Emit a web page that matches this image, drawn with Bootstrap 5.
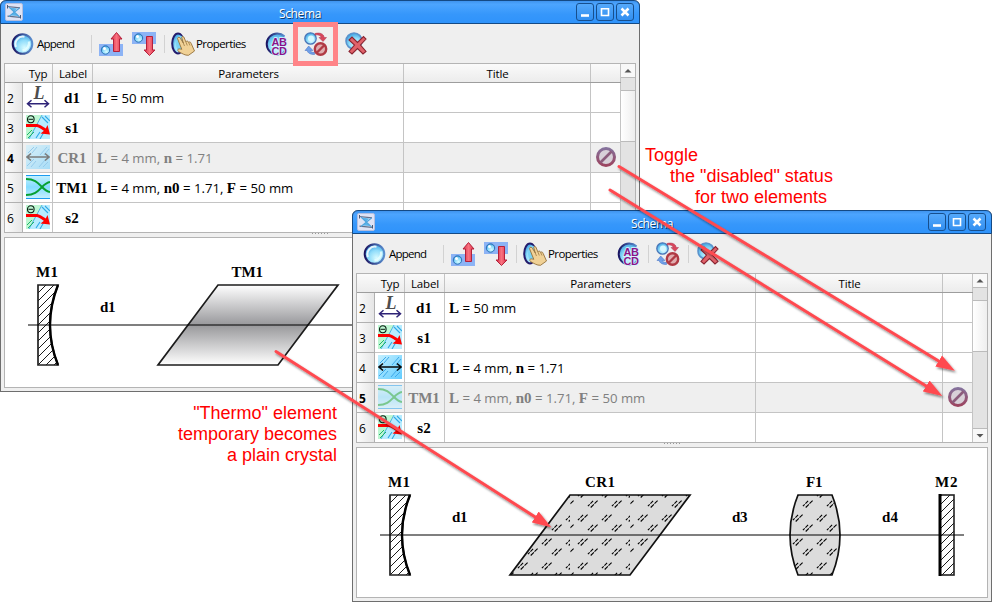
<!DOCTYPE html>
<html lang="en">
<head>
<meta charset="utf-8">
<title>Schema</title>
<link rel="stylesheet" href="https://cdn.jsdelivr.net/npm/bootstrap@5.3.0/dist/css/bootstrap.min.css">
<style>
body{width:992px;height:602px;overflow:hidden;background:#fff;color:#000;font:12px/16px "Open Sans","Noto Sans",sans-serif}
.desk{width:992px;height:602px}
.win{position:absolute;width:640px;height:392px;background:#efefef;border:1px solid #6e6e6e;border-top:0;border-radius:6px 6px 0 0}
.win-a{left:0;top:0}
.win-b{left:352px;top:210px}
.bar-title{height:24px;margin:0 -1px;border:1px solid #144a85;border-radius:6px 6px 0 0;background:linear-gradient(#3f93ee,#4ca5ff 15%,#3697fb 60%,#2f93fb);color:#fff;text-shadow:1px 1px 0 #123c6c;padding:0 5px 0 4px}
.bar-title .caption{font-size:12px;line-height:23px;letter-spacing:-.4px;padding:2px 0 0 1px}
.bar-title .wgroup{gap:2px}
.bar-title .wbtn{width:18px;height:18px;border:1px solid #174f8d;border-radius:3px;background:linear-gradient(#55a9fb,#328ff0)}
.tools{display:grid;height:39px;padding-left:10px;grid-template-columns:80px 8px 33px 32px 7px 93px 32px 8px 32px 9px 24px;align-items:center}
.tools .tbtn{display:flex;align-items:center;white-space:nowrap;font-size:11.5px;letter-spacing:-.6px;gap:1px}
.tools .tbtn-add span{margin-left:1px;letter-spacing:-.75px}
.tools i{width:1px;height:18px;background:#d2d2d2}
.frame{margin:0 3px;border:1px solid #b4b4b4}
.grid-row,.grid-head{display:grid;grid-template-columns:18px 30px 40px 311px 187px 30px;width:616px}
.grid-head{height:19px;background:linear-gradient(#fafafa,#ececec);text-align:center;line-height:19px;font-size:11.5px;border-bottom:1px solid #9d9d9d;letter-spacing:-.15px}
.grid-head>div{border-right:1px solid #c4c4c4;height:18px;padding-left:1px}
.grid-head>div:first-child{border:0}
.grid-row{height:30px;background:#fff;line-height:28px;grid-template-rows:30px}
.grid-row:last-child{height:29px;grid-template-rows:29px}
.grid-row>div{border-right:1px solid #c4c4c4;border-bottom:1px solid #c4c4c4;white-space:nowrap;padding-top:1px}
.grid-row:last-child>div{border-bottom:0}
.grid-row .num{background:linear-gradient(90deg,#fbfbfb,#e6e6e6);padding-left:2px;padding-top:2px;font-size:12px;border-color:#b0b0b0}
.grid-row .pic{padding:2px 0 0 3px;line-height:0}
.grid-row .lbl,.grid-row b{font:bold 15px/28px "Liberation Serif",serif}
.grid-row .lbl{text-align:center;padding-right:1px}
.grid-row .par{padding-left:4px;font-size:13.2px}
.grid-row .stat{padding:4px 0 0 5px;line-height:0}
.grid-row.off{background:#efefef}
.grid-row.off .par,.grid-row.off .lbl{color:#808080}
.grid-row.off .pic svg{opacity:.5}
.grid-row.off .num{font-weight:bold}
.scroller{width:14px;background:#e3e3e3}
.scroller .sb{height:14px;background:#f8f8f8;border-bottom:1px solid #bbb;line-height:0}
.scroller .gapper{height:12px}
.scroller .thumb{height:52px;border:solid #bbb;border-width:1px 0;background:linear-gradient(90deg,#fff,#eee)}
.scroller .sb-end{border-bottom:0;border-top:1px solid #bbb}
.grip{height:4px;line-height:0;text-align:center}
.view{height:151px;background:#fff;line-height:0}
.view text{font:bold 15px "Liberation Serif",serif}
.mark-box{position:absolute;left:293px;top:22px;width:45px;height:44px;border:5px solid #ff8488}
.note{position:absolute;color:#f00;font:18px/21px "Liberation Sans",Arial,sans-serif;white-space:nowrap}
.note-a{left:645px;top:145px}
.note-b{right:655px;top:402.5px;text-align:right}
.note .in1{padding-left:25px}
.note .in2{padding-left:50px}
.over{position:absolute;left:0;top:0}
</style>
<script src="https://cdn.jsdelivr.net/npm/bootstrap@5.3.0/dist/js/bootstrap.bundle.min.js"></script>
</head>
<body>
<svg width="0" height="0" class="position-absolute">
<defs>
<radialGradient id="gBall" cx=".6" cy=".7" r=".7"><stop offset="0" stop-color="#d8fbff"/><stop offset=".55" stop-color="#8fdcfa"/><stop offset="1" stop-color="#3a9fe0"/></radialGradient>
<linearGradient id="gRim" x2="1" y2="0"><stop offset="0" stop-color="#1c1460"/><stop offset="1" stop-color="#5a8fd0"/></linearGradient>
<linearGradient id="gRed" x2="1" y2="0"><stop offset="0" stop-color="#d92c45"/><stop offset=".5" stop-color="#f8717f"/><stop offset="1" stop-color="#dd3048"/></linearGradient>
<linearGradient id="gSky" x2="0" y2="1"><stop offset="0" stop-color="#c9f1ff"/><stop offset=".5" stop-color="#84dcff"/><stop offset="1" stop-color="#c9f1ff"/></linearGradient>
<linearGradient id="gCr" x2="1" y2="1"><stop offset="0" stop-color="#c4f0ff"/><stop offset="1" stop-color="#62ccff"/></linearGradient>
<linearGradient id="gTm" x2="0" y2="1"><stop offset="0" stop-color="#fff"/><stop offset=".5" stop-color="#98989b"/><stop offset="1" stop-color="#fff"/></linearGradient>
<linearGradient id="gNo" x2="0" y2="1"><stop offset="0" stop-color="#85719b"/><stop offset="1" stop-color="#9c4560"/></linearGradient>
<pattern id="hatch" width="8" height="8" patternUnits="userSpaceOnUse" patternTransform="translate(38 285)"><path d="M-1 9L9 -1M-1 1L1 -1M7 9L9 7" stroke="#000" stroke-width=".9"/></pattern>
<g id="tick"><path d="M-4.800 2.600L-3 .8M-2.300 .1L.4 -2.600M-2 4L1.200 .8M1.800 .2L4.900 -2.900" stroke="#000" stroke-width="1.100" fill="none"/></g>
<pattern id="glass" width="60" height="24" patternUnits="userSpaceOnUse" patternTransform="translate(158 285)">
<rect width="60" height="24" fill="#dcdcdc"/>
<use href="#tick" x="-1.3" y="8.5"/><use href="#tick" x="22.7" y="8.5"/><use href="#tick" x="46.7" y="8.5"/>
<use href="#tick" x="12.7" y="22.5"/><use href="#tick" x="36.7" y="22.5"/><use href="#tick" x="60.7" y="22.5"/>
<use href="#tick" x="12.7" y="-1.5"/><use href="#tick" x="36.7" y="-1.5"/><use href="#tick" x="60.7" y="-1.5"/>
</pattern>
<pattern id="glass2" href="#glass" patternTransform="translate(433 285)"/>

<symbol id="i-ball" viewBox="0 0 24 24"><circle cx="11.500" cy="12" r="9.800" fill="url(#gBall)" stroke="url(#gRim)" stroke-width="2"/><path d="M5 15A7.500 7.500 0 0 1 13.500 4.800" fill="none" stroke="#fff" stroke-width="2" opacity=".85"/><path d="M18 9.500A7.500 7.500 0 0 1 11.500 18.500" fill="none" stroke="#e8ffff" stroke-width="2.500" opacity=".8"/></symbol>
<symbol id="i-up" viewBox="0 0 24 24"><rect y="12" width="24" height="12" fill="#8cb3f5"/><circle cx="6.500" cy="18" r="4.200" fill="url(#gBall)" stroke="#2b6fb5"/><circle cx="5.500" cy="16.500" r="1.500" fill="#fff"/><path d="M17.500 .5L23 7H20.500V19.500H14.500V7H12z" fill="url(#gRed)" stroke="#b3203a"/></symbol>
<symbol id="i-down" viewBox="0 0 24 24"><rect width="24" height="12" fill="#8cb3f5"/><circle cx="6.500" cy="6" r="4.200" fill="url(#gBall)" stroke="#2b6fb5"/><circle cx="5.500" cy="4.500" r="1.500" fill="#fff"/><path d="M17.500 23.500L23 18H20.500V4.500H14.500V18H12z" fill="url(#gRed)" stroke="#b3203a"/></symbol>
<symbol id="i-hand" viewBox="0 0 24 24"><ellipse cx="7" cy="11.500" rx="5.800" ry="10" fill="url(#gBall)" stroke="#241c6c" stroke-width="2"/><ellipse cx="9" cy="11.500" rx="4" ry="8" fill="#79d2f5"/><path d="M6.500 6.500C7 4.600 8.800 5 9.500 6.500L12.300 11L10.700 5.500C11 4 12.800 4.200 13.300 6L14.800 9.800C15.500 8.600 17 8.800 17.500 10.200C18.500 9.500 20 10.200 20.200 11.500L23.500 19L17.500 23.300C14 23.500 11 21.500 7.500 19.500C6 18 7 16.500 9.300 17L10.800 17.300L9 13z" fill="#f0d196" stroke="#94703a" stroke-width=".9"/><path d="M12.300 11L13.500 14M14.800 9.800L16.300 13.500M17.500 10.200L19 13.500" stroke="#94703a" stroke-width=".7"/></symbol>
<symbol id="i-abcd" viewBox="0 0 24 24"><path d="M20.500 4A11 11 0 1 0 20.500 20z" fill="url(#gBall)"/><path d="M20.500 4.200A10.600 10.600 0 1 0 20.500 19.800" fill="none" stroke="url(#gRim)" stroke-width="2"/><g font-family="Liberation Sans,sans-serif" font-weight="700" font-size="11" fill="#8a1489" stroke="#d9f6ff" stroke-width="1.500" paint-order="stroke"><text x="7.500" y="13.500" textLength="15.500">AB</text><text x="7.500" y="23" textLength="15.500">CD</text></g></symbol>
<symbol id="i-toggle" viewBox="0 0 24 24"><circle cx="6.500" cy="6.500" r="5.700" fill="url(#gBall)" stroke="#4a76b8" stroke-width="1.300"/><circle cx="7" cy="6.500" r="3" fill="#d6f8ff"/><path d="M11 1.500C16 .2 19.800 1.800 20.200 5.500H22.500L19 9.500L15 5.500H17.200C16.500 3.500 14.500 2.500 11 3z" fill="#d8475c" stroke="#aa3550" stroke-width=".5"/><path d="M10.500 22.500C6.500 22.500 3.500 21 3.200 18.500H1L4.700 14L9 18.500H6.300C7 20 8.300 20.500 10.500 20.300z" fill="#6f9fe8" stroke="#3f6cc0" stroke-width=".5"/><circle cx="16.500" cy="17" r="5.700" fill="#e0aeb0" stroke="#b03a44" stroke-width="2.400"/><path d="M12.500 21L20.500 13" stroke="#b03a44" stroke-width="2.400"/></symbol>
<symbol id="i-del" viewBox="0 0 24 24"><circle cx="9" cy="9" r="8" fill="url(#gBall)" stroke="#5b93cc" stroke-width="1.600"/><path d="M4 8L7 5L12.500 10.500L18.500 4.500L21 7L15.500 13L21 19.500L18 22L12.500 16.500L7 22L4 19.500L9.500 13z" fill="#e0626a" stroke="#8a2430" stroke-width="1.100"/></symbol>
<symbol id="i-app" viewBox="0 0 18 18"><rect x=".5" y=".5" width="17" height="17" rx="1.500" fill="#dfe3f5" stroke="#b4bfdf"/><path d="M5 4.500L12 5.500L9 9zM9 9L13.500 13L6 12.500z" fill="#5ab4ea"/><path d="M2.500 3.500L15 4.800M2.500 13.200L15 14.300" stroke="#65708a" stroke-width="1.200"/><path d="M4 4L14.500 14M14.500 5L4 13.500" stroke="#4fa5de" stroke-width="1.100"/><path d="M2.500 2V5.500M15.500 12V15.500" stroke="#4c5873"/></symbol>
<symbol id="t-len" viewBox="0 0 24 24"><text x="7.500" y="13.500" font-family="Liberation Serif,serif" font-style="italic" font-weight="700" font-size="18" fill="#4d4d4d" textLength="11">L</text><path d="M2 18.800H22M5.500 15.300L1.500 18.800L5.500 22.300M18.500 15.300L22.500 18.800L18.500 22.300" fill="none" stroke="#2e2377" stroke-width="1.500"/></symbol>
<symbol id="t-theta" viewBox="0 0 24 24"><path d="M0 0H16L3 24H0z" fill="#bdf7d2"/><path d="M16 0H24V24H3z" fill="#b8ecff"/><path d="M16 0L3 24" stroke="#49b4dc"/><path d="M16 2L22 8M19 1L24 6M14 17L10 23M18 17L14 24" stroke="#2ea9e6" stroke-width="1.100"/><path d="M1 20L6 15M2 23L8 17" stroke="#1fb56a"/><ellipse cx="4.800" cy="4.300" rx="3.300" ry="3.500" fill="none" stroke="#0a1c12" stroke-width="1.100"/><path d="M2.500 4.300H7" stroke="#0a1c12"/><path d="M0 10.500H11C14 11 17 13.500 20 15.500" fill="none" stroke="#f00" stroke-width="3"/><path d="M21.500 10L24 19.500L14.500 18.500L19 15z" fill="#f00"/></symbol>
<symbol id="t-cr" viewBox="0 0 24 24"><rect width="24" height="24" fill="url(#gCr)"/><path d="M2 8L8 2M6 8L11 2M14 10L21 2M18 10L23 4M1 21L8 14M5 22L10 16M13 22L19 15M17 22L22 17" stroke="#3ea9ea"/><path d="M1 12H23M5 8.500L1 12L5 15.500M19 8.500L23 12L19 15.500" fill="none" stroke="#0a0a0a" stroke-width="1.600"/></symbol>
<symbol id="t-tm" viewBox="0 0 24 24"><rect width="24" height="24" fill="url(#gSky)"/><path d="M0 .5H24M0 23.500H24" stroke="#1b9cf0"/><path d="M0 4C9 4 12 8 16 12S21 16.500 24 17M0 20C9 20 12 16 16 12S21 7.500 24 7" fill="none" stroke="#07a032" stroke-width="2"/></symbol>
<symbol id="i-no" viewBox="0 0 20 20"><circle cx="10" cy="10" r="8.500" fill="#d8d0d8" stroke="url(#gNo)" stroke-width="3"/><path d="M4.500 15.500L15.500 4.500" stroke="#8c5c7c" stroke-width="2.600"/></symbol>
<symbol id="w-min" viewBox="0 0 16 16"><path d="M4 11.500H12" stroke="#fff" stroke-width="2.600"/></symbol>
<symbol id="w-max" viewBox="0 0 16 16"><path d="M4.500 4.700H11.500V11.500H4.500z" fill="none" stroke="#fff" stroke-width="1.600"/></symbol>
<symbol id="w-x" viewBox="0 0 16 16"><path d="M4.500 4.500L11.500 11.500M11.500 4.500L4.500 11.500" stroke="#fff" stroke-width="2.500"/></symbol>
<g id="mirror"><path d="M38 285H58Q42 325 58 365H38z" fill="#fff"/><path d="M38 285H58Q42 325 58 365H38z" fill="url(#hatch)" stroke="#222" stroke-width="1.700"/><path d="M58 285Q42 325 58 365" fill="none" stroke="#000" stroke-width="2.400"/></g>
<g id="dots"><path d="M0 .5H17" stroke="#999" stroke-dasharray="1 2"/></g>
</defs>
</svg>

<main class="desk position-relative overflow-hidden">

<section class="win win-a">
<header class="bar-title d-flex align-items-center"><svg width="18" height="18"><use href="#i-app"/></svg><span class="caption flex-grow-1 text-center">Schema</span><span class="d-flex wgroup"><span class="wbtn d-flex"><svg width="16" height="16"><use href="#w-min"/></svg></span><span class="wbtn d-flex"><svg width="16" height="16"><use href="#w-max"/></svg></span><span class="wbtn d-flex"><svg width="16" height="16"><use href="#w-x"/></svg></span></span></header>
<div class="tools">
<span class="tbtn tbtn-add"><svg width="24" height="24"><use href="#i-ball"/></svg><span>Append</span></span><i></i>
<svg width="24" height="24"><use href="#i-up"/></svg><svg width="24" height="24"><use href="#i-down"/></svg><i></i>
<span class="tbtn"><svg width="24" height="24"><use href="#i-hand"/></svg>Properties</span>
<svg width="24" height="24"><use href="#i-abcd"/></svg><i></i><svg width="24" height="24"><use href="#i-toggle"/></svg><i></i><svg width="24" height="24"><use href="#i-del"/></svg>
</div>
<div class="frame d-flex">
<div>
<div class="grid-head"><div></div><div>Typ</div><div>Label</div><div>Parameters</div><div>Title</div><div></div></div>
<div class="grid-row"><div class="num">2</div><div class="pic"><svg width="24" height="24"><use href="#t-len"/></svg></div><div class="lbl">d1</div><div class="par"><b>L</b> = 50 mm</div><div></div><div></div></div>
<div class="grid-row"><div class="num">3</div><div class="pic"><svg width="24" height="24"><use href="#t-theta"/></svg></div><div class="lbl">s1</div><div></div><div></div><div></div></div>
<div class="grid-row off"><div class="num">4</div><div class="pic"><svg width="24" height="24"><use href="#t-cr"/></svg></div><div class="lbl">CR1</div><div class="par"><b>L</b> = 4 mm, <b>n</b> = 1.71</div><div></div><div class="stat"><svg width="20" height="20"><use href="#i-no"/></svg></div></div>
<div class="grid-row"><div class="num">5</div><div class="pic"><svg width="24" height="24"><use href="#t-tm"/></svg></div><div class="lbl">TM1</div><div class="par"><b>L</b> = 4 mm, <b>n0</b> = 1.71, <b>F</b> = 50 mm</div><div></div><div></div></div>
<div class="grid-row"><div class="num">6</div><div class="pic"><svg width="24" height="24"><use href="#t-theta"/></svg></div><div class="lbl">s2</div><div></div><div></div><div></div></div>
</div>
<div class="scroller d-flex flex-column"><div class="sb"><svg width="14" height="14"><path d="M3.500 8.500L7 5L10.500 8.500z" fill="#555"/></svg></div><div class="gapper"></div><div class="thumb"></div><div class="sb sb-end mt-auto"><svg width="14" height="13"><path d="M3.500 5L7 8.500L10.500 5z" fill="#555"/></svg></div></div>
</div>
<div class="grip"><svg width="17" height="2"><use href="#dots"/></svg></div>
<div class="frame view"><svg width="630" height="149" viewBox="5 238 630 149">
<path d="M218 285H338L278 365H158z" fill="url(#gTm)" stroke="#1c1c1c" stroke-width="1.700"/><use href="#mirror"/>
<path d="M28 325H620" stroke="#000" stroke-opacity=".5" stroke-width="2"/>
<text x="36" y="277" textLength="22">M1</text><text x="100" y="312" textLength="15.500">d1</text><text x="231.500" y="277" textLength="31.500">TM1</text></svg></div>
</section>

<section class="win win-b">
<header class="bar-title d-flex align-items-center"><svg width="18" height="18"><use href="#i-app"/></svg><span class="caption flex-grow-1 text-center">Schema</span><span class="d-flex wgroup"><span class="wbtn d-flex"><svg width="16" height="16"><use href="#w-min"/></svg></span><span class="wbtn d-flex"><svg width="16" height="16"><use href="#w-max"/></svg></span><span class="wbtn d-flex"><svg width="16" height="16"><use href="#w-x"/></svg></span></span></header>
<div class="tools">
<span class="tbtn tbtn-add"><svg width="24" height="24"><use href="#i-ball"/></svg><span>Append</span></span><i></i>
<svg width="24" height="24"><use href="#i-up"/></svg><svg width="24" height="24"><use href="#i-down"/></svg><i></i>
<span class="tbtn"><svg width="24" height="24"><use href="#i-hand"/></svg>Properties</span>
<svg width="24" height="24"><use href="#i-abcd"/></svg><i></i><svg width="24" height="24"><use href="#i-toggle"/></svg><i></i><svg width="24" height="24"><use href="#i-del"/></svg>
</div>
<div class="frame d-flex">
<div>
<div class="grid-head"><div></div><div>Typ</div><div>Label</div><div>Parameters</div><div>Title</div><div></div></div>
<div class="grid-row"><div class="num">2</div><div class="pic"><svg width="24" height="24"><use href="#t-len"/></svg></div><div class="lbl">d1</div><div class="par"><b>L</b> = 50 mm</div><div></div><div></div></div>
<div class="grid-row"><div class="num">3</div><div class="pic"><svg width="24" height="24"><use href="#t-theta"/></svg></div><div class="lbl">s1</div><div></div><div></div><div></div></div>
<div class="grid-row"><div class="num">4</div><div class="pic"><svg width="24" height="24"><use href="#t-cr"/></svg></div><div class="lbl">CR1</div><div class="par"><b>L</b> = 4 mm, <b>n</b> = 1.71</div><div></div><div></div></div>
<div class="grid-row off"><div class="num">5</div><div class="pic"><svg width="24" height="24"><use href="#t-tm"/></svg></div><div class="lbl">TM1</div><div class="par"><b>L</b> = 4 mm, <b>n0</b> = 1.71, <b>F</b> = 50 mm</div><div></div><div class="stat"><svg width="20" height="20"><use href="#i-no"/></svg></div></div>
<div class="grid-row"><div class="num">6</div><div class="pic"><svg width="24" height="24"><use href="#t-theta"/></svg></div><div class="lbl">s2</div><div></div><div></div><div></div></div>
</div>
<div class="scroller d-flex flex-column"><div class="sb"><svg width="14" height="14"><path d="M3.500 8.500L7 5L10.500 8.500z" fill="#555"/></svg></div><div class="gapper"></div><div class="thumb"></div><div class="sb sb-end mt-auto"><svg width="14" height="13"><path d="M3.500 5L7 8.500L10.500 5z" fill="#555"/></svg></div></div>
</div>
<div class="grip"><svg width="17" height="2"><use href="#dots"/></svg></div>
<div class="frame view"><svg width="630" height="149" viewBox="5 238 630 149">
<path d="M218 285H338L278 365H158z" fill="url(#glass)" stroke="#111" stroke-width="1.700"/><use href="#mirror"/>
<path d="M446 285H480Q496 325 480 365H446Q430 325 446 285z" fill="url(#glass2)" stroke="#111" stroke-width="1.700"/>
<rect x="588" y="285" width="14" height="80" fill="#fff"/><rect x="588" y="285" width="14" height="80" fill="url(#hatch)" stroke="#222" stroke-width="1.600"/><path d="M588 284V366" stroke="#000" stroke-width="3"/>
<path d="M28 325H612" stroke="#000" stroke-opacity=".5" stroke-width="2"/>
<text x="36" y="277" textLength="22">M1</text><text x="100" y="312" textLength="15.500">d1</text><text x="233" y="277" textLength="30">CR1</text><text x="380" y="312" textLength="15.500">d3</text><text x="454" y="277" textLength="16.500">F1</text><text x="530" y="312" textLength="16">d4</text><text x="583" y="277" textLength="22.500">M2</text></svg></div>
</section>

<div class="mark-box"></div>
<div class="note note-a"><div>Toggle</div><div class="in1">the "disabled" status</div><div class="in2">for two elements</div></div>
<div class="note note-b"><div>"Thermo" element</div><div>temporary becomes</div><div>a plain crystal</div></div>
<svg class="over" width="992" height="602">
<defs><filter id="sh" x="-5%" y="-5%" width="110%" height="110%"><feDropShadow dx="1.500" dy="2" stdDeviation="1" flood-color="#000" flood-opacity=".45"/></filter>
<marker id="head" markerUnits="userSpaceOnUse" markerWidth="20" markerHeight="14" refX="1" refY="7" orient="auto"><path d="M0 .5L19 7L0 13.500z" fill="#ff4a50"/></marker></defs>
<g filter="url(#sh)" stroke="#ff4a50" stroke-width="3" stroke-linecap="round" fill="none">
<path d="M619 166.500L939.500 361.500" marker-end="url(#head)"/><path d="M610 190L927 386.500" marker-end="url(#head)"/><path d="M276 351.500L536 517.500" marker-end="url(#head)"/></g>
</svg>
</main>
</body>
</html>
